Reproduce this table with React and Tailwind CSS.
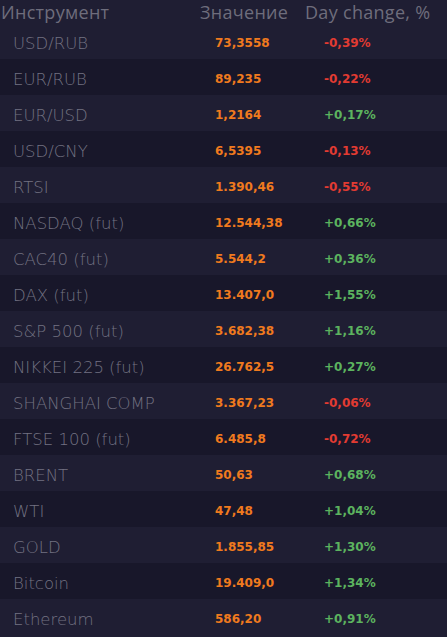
import React from "react";

const rows = [
  ["USD/RUB", "73,3558", "-0,39%"],
  ["EUR/RUB", "89,235", "-0,22%"],
  ["EUR/USD", "1,2164", "+0,17%"],
  ["USD/CNY", "6,5395", "-0,13%"],
  ["RTSI", "1.390,46", "-0,55%"],
  ["NASDAQ (fut)", "12.544,38", "+0,66%"],
  ["CAC40 (fut)", "5.544,2", "+0,36%"],
  ["DAX (fut)", "13.407,0", "+1,55%"],
  ["S&P 500 (fut)", "3.682,38", "+1,16%"],
  ["NIKKEI 225 (fut)", "26.762,5", "+0,27%"],
  ["SHANGHAI COMP", "3.367,23", "-0,06%"],
  ["FTSE 100 (fut)", "6.485,8", "-0,72%"],
  ["BRENT", "50,63", "+0,68%"],
  ["WTI", "47,48", "+1,04%"],
  ["GOLD", "1.855,85", "+1,30%"],
  ["Bitcoin", "19.409,0", "+1,34%"],
  ["Ethereum", "586,20", "+0,91%"],
];

export default function App() {
  return (
    <div className="w-[447px] h-[637px] bg-[#1f1e33] overflow-hidden">
      <div className="flex h-[23px] items-center text-[18px] text-[#6e6d7c] font-['Open_Sans',sans-serif] leading-none tracking-[0.3px]">
        <div className="w-[200px] pl-[1px]">Инструмент</div>
        <div className="w-[105px]">Значение</div>
        <div>Day change, %</div>
      </div>
      {rows.map(([name, val, ch], i) => (
        <div
          key={name}
          className={`flex h-[36px] items-center pt-[6px] ${i % 2 === 0 ? "bg-[#1f1e33]" : "bg-[#18172a]"}`}
        >
          <div className="w-[215px] pl-[13px] text-[16.5px] font-extralight text-[#737282] font-['DejaVu_Sans',sans-serif] leading-none">
            {name}
          </div>
          <div className="w-[109px] text-[12px] font-bold text-[#f07a1e] font-['DejaVu_Sans',sans-serif] leading-none -mt-[2px]">
            {val}
          </div>
          <div
            className={`text-[12px] font-bold font-['DejaVu_Sans',sans-serif] leading-none -mt-[2px] ${
              ch.startsWith("-") ? "text-[#e23b32]" : "text-[#5cb35f]"
            }`}
          >
            {ch}
          </div>
        </div>
      ))}
    </div>
  );
}
